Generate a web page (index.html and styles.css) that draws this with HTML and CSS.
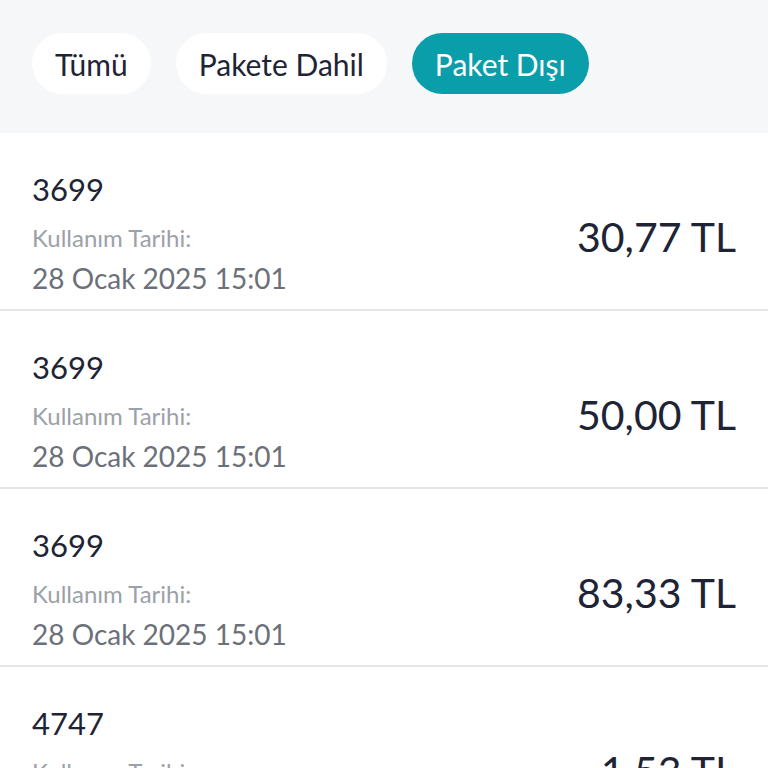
FILE: index.html
```html
<!DOCTYPE html>
<html lang="tr">
<head>
  <meta charset="UTF-8">
  <title>Kullanım Detayı</title>
  <link rel="stylesheet" href="styles.css">
</head>
<body>
  <div class="filtros">
    <button class="pill">Tümü</button>
    <button class="pill">Pakete Dahil</button>
    <button class="pill activo">Paket Dışı</button>
  </div>

  <ul class="lista">
    <li class="fila">
      <div class="info">
        <div class="numero">3699</div>
        <div class="etiqueta">Kullanım Tarihi:</div>
        <div class="fecha">28 Ocak 2025 15:01</div>
      </div>
      <div class="monto">30,77 TL</div>
    </li>
    <li class="fila">
      <div class="info">
        <div class="numero">3699</div>
        <div class="etiqueta">Kullanım Tarihi:</div>
        <div class="fecha">28 Ocak 2025 15:01</div>
      </div>
      <div class="monto">50,00 TL</div>
    </li>
    <li class="fila">
      <div class="info">
        <div class="numero">3699</div>
        <div class="etiqueta">Kullanım Tarihi:</div>
        <div class="fecha">28 Ocak 2025 15:01</div>
      </div>
      <div class="monto">83,33 TL</div>
    </li>
    <li class="fila">
      <div class="info">
        <div class="numero">4747</div>
        <div class="etiqueta">Kullanım Tarihi:</div>
        <div class="fecha">28 Ocak 2025 15:01</div>
      </div>
      <div class="monto">1,53 TL</div>
    </li>
  </ul>
</body>
</html>
```

FILE: styles.css
```css
body {
  margin: 0;
  font-family: Lato, "Noto Sans", sans-serif;
  background: #ffffff;
  color: #1e2435;
  overflow: hidden;
  height: 768px;
}

.filtros {
  background: #f6f7f9;
  height: 133px;
  box-sizing: border-box;
  padding: 33px 32px 0;
  display: flex;
  gap: 25px;
  align-items: flex-start;
}

.pill {
  font-family: inherit;
  font-size: 30px;
  height: 61px;
  padding: 0 23px;
  border: none;
  border-radius: 31px;
  background: #ffffff;
  color: #1e2435;
}

.pill.activo {
  background: #0a9eab;
  color: #ffffff;
}

.lista {
  list-style: none;
  margin: 0;
  padding: 0;
}

.fila {
  height: 178px;
  box-sizing: border-box;
  padding: 35px 32px 10px;
  border-bottom: 2px solid #e3e5e9;
  display: flex;
  align-items: center;
  justify-content: space-between;
}

.numero {
  font-size: 31px;
  line-height: 40px;
}

.etiqueta {
  font-size: 24px;
  line-height: 40px;
  margin-top: 9px;
  color: #9ca1a9;
}

.fecha {
  font-size: 28px;
  line-height: 40px;
  color: #6c7079;
}

.monto {
  font-size: 41px;
  line-height: 48px;
  padding-top: 6px;
  color: #1e2435;
}
```
